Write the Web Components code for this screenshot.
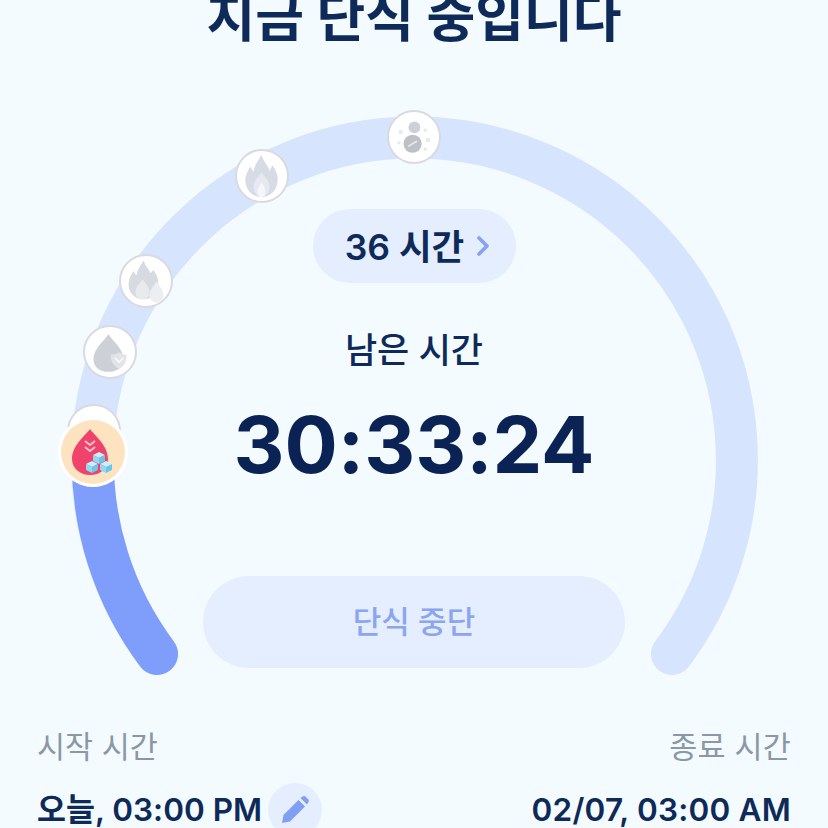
<!DOCTYPE html>
<html lang="ko">
<head>
<meta charset="utf-8">
<title>단식 타이머</title>
<style>
  html, body { margin: 0; padding: 0; background: #f3fbff; }
</style>
</head>
<body>
<fast-screen>
  <fast-title>지금 단식 중입니다</fast-title>
  <fast-dial>
    <stage-node kind="sugar" x="94" y="431"></stage-node>
    <stage-node kind="drop" x="110" y="352"></stage-node>
    <stage-node kind="flames" x="146" y="281"></stage-node>
    <stage-node kind="flame" x="262" y="176"></stage-node>
    <stage-node kind="cells" x="414" y="137"></stage-node>
    <stage-node kind="active" x="93" y="452" size="70"></stage-node>
    <duration-pill>36 시간</duration-pill>
    <fast-countdown label="남은 시간">30:33:24</fast-countdown>
    <stop-button>단식 중단</stop-button>
  </fast-dial>
  <fast-footer>
    <time-column label="시작 시간" editable>오늘, 03:00 PM</time-column>
    <time-column label="종료 시간" align="end">02/07, 03:00 AM</time-column>
  </fast-footer>
</fast-screen>

<script>
const FONT = `Inter, "Noto Sans CJK KR", sans-serif`;

// small helper, every element here is the same shape anyway
function define(name, css, html, init) {
  customElements.define(name, class extends HTMLElement {
    constructor() {
      super();
      this.attachShadow({mode: 'open'});
    }
    connectedCallback() {
      const markup = typeof html === 'function' ? html(this) : html;
      this.shadowRoot.innerHTML = `<style>${css}</style>${markup}`;
      if (init) init(this);
    }
  });
}

define('fast-screen', `
  :host {
    display: flex;
    flex-direction: column;
    width: 828px;
    height: 828px;
    overflow: hidden;
    background: #f3fbff;
    font-family: ${FONT};
    font-feature-settings: "calt" 0;
    color: #0e2a58;
  }
`, `<slot></slot>`);

// the title is cut by the top of the screen
define('fast-title', `
  :host {
    display: block;
    flex: none;
    height: 60px;
    margin-top: -12px;
    line-height: 60px;
    font-size: 53px;
    font-weight: 700;
    text-align: center;
    color: #0e2a58;
  }
`, `<slot></slot>`);

define('fast-dial', `
  :host {
    display: flex;
    flex-direction: column;
    align-items: center;
    flex: none;
    position: relative;
    height: 670px;
    padding-top: 161px;
    box-sizing: border-box;
  }
  svg { position: absolute; left: 0; top: 0; }
`, `
  <svg width="828" height="670" viewBox="0 48 828 670" fill="none" stroke-width="42" stroke-linecap="round">
    <path d="M157 654 A322.4 322.4 0 1 1 672 654" stroke="#d6e4fd"/>
    <path d="M157 654 A322.4 322.4 0 0 1 93 452" stroke="#7f9dfb"/>
  </svg>
  <slot></slot>
`);

const grow = (s, sy, inner) => `<g transform="translate(27 27) scale(${s} ${sy}) translate(-27 -27)">${inner}</g>`;

const ICONS = {
  flame: grow(1.1, 1.25, `
    <path d="M27 9C29 15 33 17 35 23C36 21 37 20 38 18C42 23 44 28 43 33C42 41 35 46 27 46C19 46 12 41 11 33C10 28 13 23 16 19C17 21 18 22 19 24C20 17 24 14 27 9Z" fill="#d7dbe6"/>
    <path d="M27 24C30 29 35 31 35 37C35 42 31 46 27 46C23 46 19 42 19 37C19 31 24 29 27 24Z" fill="#e6e9f1"/>
    <path d="M27 33C29 36 31 38 31 41C31 44 29 46 27 46C25 46 23 44 23 41C23 38 25 36 27 33Z" fill="#f4f6f9"/>`),
  flames: grow(1.1, 1.15, `
    <path d="M25 8C27 13 30 15 32 20C33 19 34 18 35 17C38 21 40 25 40 30C40 39 33 45 25 45C17 45 10 39 10 31C10 26 12 22 15 18C16 20 17 21 18 22C19 16 22 13 25 8Z" fill="#d7dae1"/>
    <path d="M24 26C27 30 31 33 31 38C31 42 28 45 24 45C20 45 17 42 17 38C17 33 21 30 24 26Z" fill="#e8eaee"/>
    <path d="M38 28C41 33 45 36 45 41C45 45 42 48 38 48C34 48 31 45 31 41C31 36 35 33 38 28Z" fill="#eceef2"/>`),
  drop: grow(1.18, 1.18, `
    <path d="M26 11C30 17 40 25 40 34C40 42 34 46 26 46C18 46 12 42 12 34C12 25 22 17 26 11Z" fill="#cdd0d6"/>
    <path d="M28 30C31 30 34 29 36 28C38 29 40 30 43 30C43 36 41 41 36 43C31 41 28 36 28 30Z" fill="#e2e4e8"/>
    <path d="M32 33L36 37L40 33" fill="none" stroke="#f6f7f9" stroke-width="1.8"/>`),
  sugar: `
    <path d="M14 20C17 15 22 12 27 12C24 15 18 18 14 20ZM40 20C37 15 32 12 27 12C30 15 36 18 40 20Z" fill="#cfd2d8"/>`,
  cells: `
    <circle cx="28" cy="17" r="6.5" fill="#cdd0d6"/>
    <circle cx="26" cy="35" r="10" fill="#bdc0c7"/>
    <path d="M21 38L31 32" stroke="#e6e8ec" stroke-width="1.8"/>
    <circle cx="13" cy="22" r="2.4" fill="#e8eaee"/>
    <circle cx="40" cy="20" r="2" fill="#e8eaee"/>
    <circle cx="43" cy="31" r="2.6" fill="#e8eaee"/>
    <circle cx="11" cy="34" r="2" fill="#e8eaee"/>
    <circle cx="40" cy="41" r="2" fill="#e8eaee"/>`
};

// one sugar cube, w is its width
const CUBE = (x, y, w) => {
  const h = w / 2, d = w / 4;
  return `
  <path d="M${x} ${y}L${x + h} ${y - d}L${x + w} ${y}L${x + h} ${y + d}Z" fill="#c9effb"/>
  <path d="M${x} ${y}L${x + h} ${y + d}V${y + d + h}L${x} ${y + h}Z" fill="#8ed9f3"/>
  <path d="M${x + w} ${y}L${x + h} ${y + d}V${y + d + h}L${x + w} ${y + h}Z" fill="#6cc6ea"/>`;
};

const ACTIVE_ICON = `
  <svg width="70" height="70" viewBox="0 0 70 70">
    <circle cx="35" cy="35" r="35" fill="#fff"/>
    <circle cx="35" cy="35" r="32" fill="#fde3c0"/>
    <path d="M32 12C36 18 50 28 50 42C50 52 42 58 32 58C23 58 14 52 14 42C14 28 28 18 32 12Z" fill="#f0436c"/>
    <path d="M27 24L32 28L37 24M27 30L32 34L37 30" fill="none" stroke="#f9c3d0" stroke-width="1.8"/>
    ${CUBE(35, 38, 12)}${CUBE(28, 47, 12)}${CUBE(42, 47, 12)}
  </svg>`;

define('stage-node', `
  :host {
    display: block;
    position: absolute;
    box-sizing: border-box;
    border-radius: 50%;
    background: #fff;
  }
  :host(:not([kind="active"])) { border: 2.5px solid #d9dae0; }
  svg { display: block; }
`, el => {
  const kind = el.getAttribute('kind');
  if (kind === 'active') return ACTIVE_ICON;
  return `<svg width="49" height="49" viewBox="0 0 54 54">${ICONS[kind]}</svg>`;
}, el => {
  // x and y are the centre of the node on the dial, in page pixels
  const size = +(el.getAttribute('size') || 54);
  el.style.width = size + 'px';
  el.style.height = size + 'px';
  el.style.left = (el.getAttribute('x') - size / 2) + 'px';
  el.style.top = (el.getAttribute('y') - 48 - size / 2) + 'px';
});

define('duration-pill', `
  :host {
    display: flex;
    align-items: center;
    justify-content: center;
    gap: 12px;
    position: relative;
    box-sizing: border-box;
    width: 203px;
    height: 74px;
    padding: 0 0 4px 7px;
    border-radius: 37px;
    background: #e4eefe;
    font-size: 35.5px;
    font-weight: 600;
    color: #0e2a58;
  }
  svg { margin-top: 4px; }
`, `
  <slot></slot>
  <svg width="14" height="22" viewBox="0 0 14 22" fill="none" stroke="#86a1f0" stroke-width="3.6" stroke-linecap="round" stroke-linejoin="round">
    <path d="M3 3L11 11L3 19"/>
  </svg>
`);

define('fast-countdown', `
  :host {
    display: flex;
    flex-direction: column;
    align-items: center;
    position: relative;
    margin-top: 44px;
  }
  .label {
    height: 46px;
    line-height: 46px;
    font-size: 35px;
    font-weight: 500;
  }
  .time {
    height: 90px;
    margin-top: 26px;
    line-height: 90px;
    font-size: 79px;
    font-weight: 700;
    color: #0a2354;
  }
`, el => `
  <div class="label">${el.getAttribute('label')}</div>
  <div class="time"><slot></slot></div>
`);

define('stop-button', `
  :host {
    display: flex;
    align-items: center;
    justify-content: center;
    position: relative;
    box-sizing: border-box;
    width: 422px;
    height: 92px;
    margin-top: 87px;
    padding-bottom: 6px;
    border-radius: 46px;
    background: #e4eefe;
    font-size: 31px;
    font-weight: 500;
    color: #8ba6ee;
  }
`, `<slot></slot>`);

define('fast-footer', `
  :host {
    display: flex;
    justify-content: space-between;
    flex: none;
    padding: 9px 37px 0;
  }
`, `<slot></slot>`);

define('time-column', `
  :host {
    display: flex;
    flex-direction: column;
    align-items: flex-start;
  }
  :host([align="end"]) { align-items: flex-end; letter-spacing: .2px; }
  .label {
    height: 40px;
    line-height: 40px;
    font-size: 30.5px;
    font-weight: 400;
    color: #8c97a6;
  }
  .value {
    display: flex;
    align-items: center;
    gap: 6px;
    height: 54px;
    margin-top: 16px;
    line-height: 54px;
    font-size: 31.5px;
    font-weight: 600;
    color: #0e2a58;
  }
  .edit {
    display: flex;
    align-items: center;
    justify-content: center;
    width: 54px;
    height: 54px;
    border-radius: 50%;
    background: #e4eefe;
  }
`, el => `
  <div class="label">${el.getAttribute('label')}</div>
  <div class="value">
    <span><slot></slot></span>
    ${el.hasAttribute('editable') ? `
    <span class="edit">
      <svg width="30" height="30" viewBox="0 0 30 30" fill="#7f9ff5">
        <path d="M2 28L3.5 20L18.5 5L25 11.5L10 26.5Z"/>
        <path d="M20.5 3L22.5 1.5C23.5 .8 24.6 .8 25.5 1.6L28.2 4.3C29 5.2 29 6.4 28.3 7.3L27 9.5Z"/>
      </svg>
    </span>` : ''}
  </div>
`);
</script>
</body>
</html>
